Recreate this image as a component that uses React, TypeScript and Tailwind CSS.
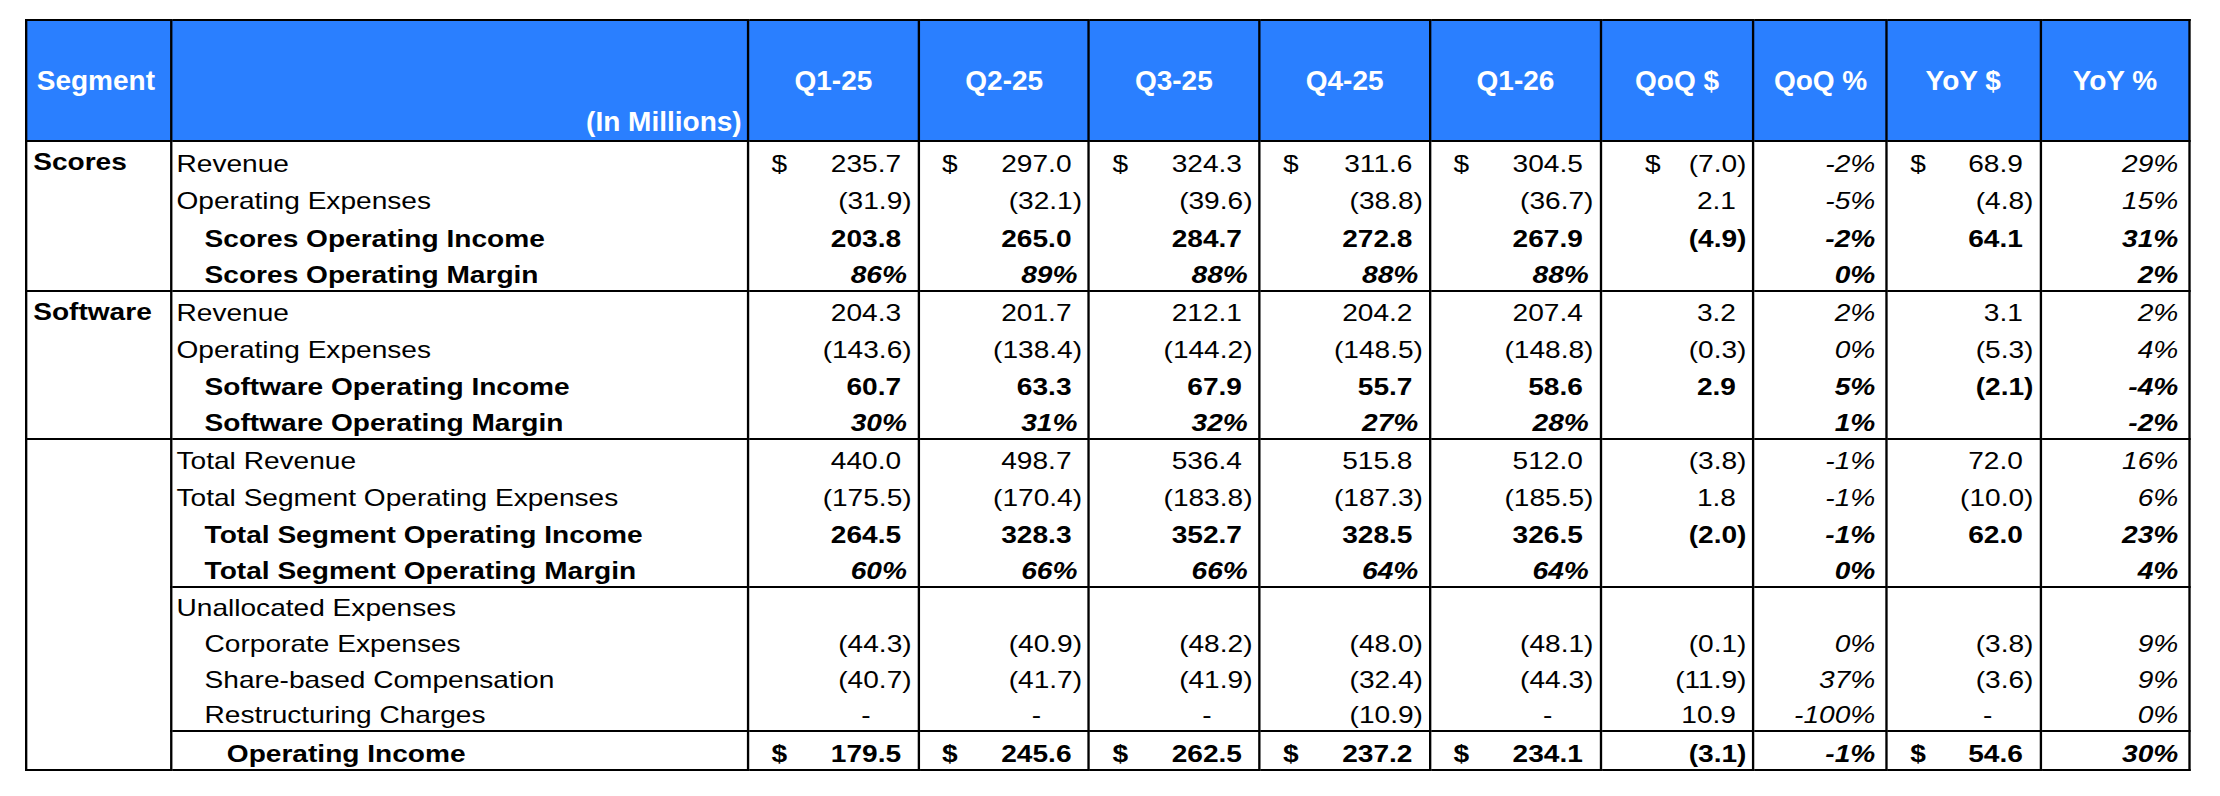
import React from 'react';

type Row = { label: string; indent?: 0 | 1 | 2; bold?: boolean; vals: string[] };

const headers = ['Q1-25', 'Q2-25', 'Q3-25', 'Q4-25', 'Q1-26', 'QoQ $', 'QoQ %', 'YoY $', 'YoY %'];

const scores: Row[] = [
  { label: 'Revenue', vals: ['$ 235.7', '$ 297.0', '$ 324.3', '$ 311.6', '$ 304.5', '$ (7.0)', '-2%', '$ 68.9', '29%'] },
  { label: 'Operating Expenses', vals: ['(31.9)', '(32.1)', '(39.6)', '(38.8)', '(36.7)', '2.1', '-5%', '(4.8)', '15%'] },
  { label: 'Scores Operating Income', indent: 1, bold: true, vals: ['203.8', '265.0', '284.7', '272.8', '267.9', '(4.9)', '-2%', '64.1', '31%'] },
  { label: 'Scores Operating Margin', indent: 1, bold: true, vals: ['86%', '89%', '88%', '88%', '88%', '', '0%', '', '2%'] },
];

const software: Row[] = [
  { label: 'Revenue', vals: ['204.3', '201.7', '212.1', '204.2', '207.4', '3.2', '2%', '3.1', '2%'] },
  { label: 'Operating Expenses', vals: ['(143.6)', '(138.4)', '(144.2)', '(148.5)', '(148.8)', '(0.3)', '0%', '(5.3)', '4%'] },
  { label: 'Software Operating Income', indent: 1, bold: true, vals: ['60.7', '63.3', '67.9', '55.7', '58.6', '2.9', '5%', '(2.1)', '-4%'] },
  { label: 'Software Operating Margin', indent: 1, bold: true, vals: ['30%', '31%', '32%', '27%', '28%', '', '1%', '', '-2%'] },
];

const totals: Row[] = [
  { label: 'Total Revenue', vals: ['440.0', '498.7', '536.4', '515.8', '512.0', '(3.8)', '-1%', '72.0', '16%'] },
  { label: 'Total Segment Operating Expenses', vals: ['(175.5)', '(170.4)', '(183.8)', '(187.3)', '(185.5)', '1.8', '-1%', '(10.0)', '6%'] },
  { label: 'Total Segment Operating Income', indent: 1, bold: true, vals: ['264.5', '328.3', '352.7', '328.5', '326.5', '(2.0)', '-1%', '62.0', '23%'] },
  { label: 'Total Segment Operating Margin', indent: 1, bold: true, vals: ['60%', '66%', '66%', '64%', '64%', '', '0%', '', '4%'] },
];

const unallocated: Row[] = [
  { label: 'Unallocated Expenses', vals: ['', '', '', '', '', '', '', '', ''] },
  { label: 'Corporate Expenses', indent: 1, vals: ['(44.3)', '(40.9)', '(48.2)', '(48.0)', '(48.1)', '(0.1)', '0%', '(3.8)', '9%'] },
  { label: 'Share-based Compensation', indent: 1, vals: ['(40.7)', '(41.7)', '(41.9)', '(32.4)', '(44.3)', '(11.9)', '37%', '(3.6)', '9%'] },
  { label: 'Restructuring Charges', indent: 1, vals: ['-', '-', '-', '(10.9)', '-', '10.9', '-100%', '-', '0%'] },
];

const operatingIncome: Row = {
  label: 'Operating Income',
  indent: 2,
  bold: true,
  vals: ['$ 179.5', '$ 245.6', '$ 262.5', '$ 237.2', '$ 234.1', '(3.1)', '-1%', '$ 54.6', '30%'],
};

const Value = ({ v, wideDollar }: { v: string; wideDollar?: boolean }) => {
  if (!v) return null;
  const dollar = v.startsWith('$');
  const s = dollar ? v.slice(1).trim() : v;
  const pct = s.endsWith('%');
  const neg = s.startsWith('(');
  const pr = pct ? 'pr-[9px]' : s === '-' ? 'pr-[40px]' : neg ? 'pr-[5px]' : 'pr-[14px]';
  return (
    <div className={`flex ${dollar ? 'justify-between' : 'justify-end'} ${pr}`}>
      {dollar && <span className={wideDollar ? 'pl-[37px]' : 'pl-[19px]'}>$</span>}
      <span className={pct ? 'italic' : ''}>{s}</span>
    </div>
  );
};

const Cells = ({ row, last }: { row: Row; last?: boolean }) => {
  const edge = last ? 'border-b-2' : '';
  const indent = row.indent === 2 ? 'pl-[47px]' : row.indent === 1 ? 'pl-[28px]' : 'pl-[4px]';
  return (
    <>
      <td className={`border-x-2 border-black align-bottom pb-[2px] whitespace-nowrap ${indent} ${edge}`}>{row.label}</td>
      {row.vals.map((v, i) => (
        <td key={i} className={`border-x-2 border-black align-bottom pb-[2px] whitespace-nowrap ${edge}`}>
          <Value v={v} wideDollar={i === 5} />
        </td>
      ))}
    </>
  );
};

const Section = ({ name, rows, span, height }: { name?: string; rows: Row[]; span?: number; height: string }) => (
  <>
    {rows.map((row, i) => (
      <tr key={row.label + i} className={`${height} ${row.bold ? 'font-bold' : ''}`}>
        {i === 0 && span !== 0 && (
          <td
            rowSpan={span ?? rows.length}
            className="border-2 border-black align-top pl-[5px] pt-[7px] font-bold"
          >
            {name}
          </td>
        )}
        <Cells row={row} last={i === rows.length - 1} />
      </tr>
    ))}
  </>
);

// header cells are drawn at natural width, so undo the body stretch inside them
const Head = ({ children, origin }: { children: React.ReactNode; origin: 'left' | 'center' | 'right' }) => (
  <span
    className={`inline-block scale-x-[0.855] ${
      origin === 'left' ? 'origin-left' : origin === 'right' ? 'origin-right' : 'origin-center'
    }`}
  >
    {children}
  </span>
);

export default function App() {
  return (
    <div className="min-h-screen overflow-hidden bg-white pt-[19px] pl-[25px] text-black font-['Liberation_Sans',Arial,sans-serif] text-[24px] leading-[26px]">
      <div className="w-fit origin-top-left scale-x-[1.17]">
        <table className="w-[1849.5px] table-fixed border-collapse border-2 border-black">
          <colgroup>
            <col className="w-[123.5px]" />
            <col className="w-[493.6px]" />
            <col className="w-[145.7px]" />
            <col className="w-[145.7px]" />
            <col className="w-[145.7px]" />
            <col className="w-[145.7px]" />
            <col className="w-[145.7px]" />
            <col className="w-[130.8px]" />
            <col className="w-[114.1px]" />
            <col className="w-[131.2px]" />
            <col className="w-[127.8px]" />
          </colgroup>
          <thead>
            <tr className="h-[121px] bg-[#2a7fff] text-white font-bold text-[28px] leading-[30px]">
              <th className="border-2 border-black text-left align-middle pl-[8px] font-bold whitespace-nowrap">
                <Head origin="left">Segment</Head>
              </th>
              <th className="border-2 border-black text-right align-bottom pr-[5px] pb-[3px] font-bold whitespace-nowrap">
                <Head origin="right">(In Millions)</Head>
              </th>
              {headers.map((h) => (
                <th key={h} className="border-2 border-black text-center align-middle font-bold whitespace-nowrap">
                  <Head origin="center">{h}</Head>
                </th>
              ))}
            </tr>
          </thead>
          <tbody>
            <Section name="Scores" rows={scores} height="h-[37.5px]" />
            <Section name="Software" rows={software} height="h-[37px]" />
            <Section name="" rows={totals} span={9} height="h-[37px]" />
            <Section rows={unallocated} span={0} height="h-[36px]" />
            <tr className="h-[39px] font-bold">
              <Cells row={operatingIncome} last />
            </tr>
          </tbody>
        </table>
      </div>
    </div>
  );
}
